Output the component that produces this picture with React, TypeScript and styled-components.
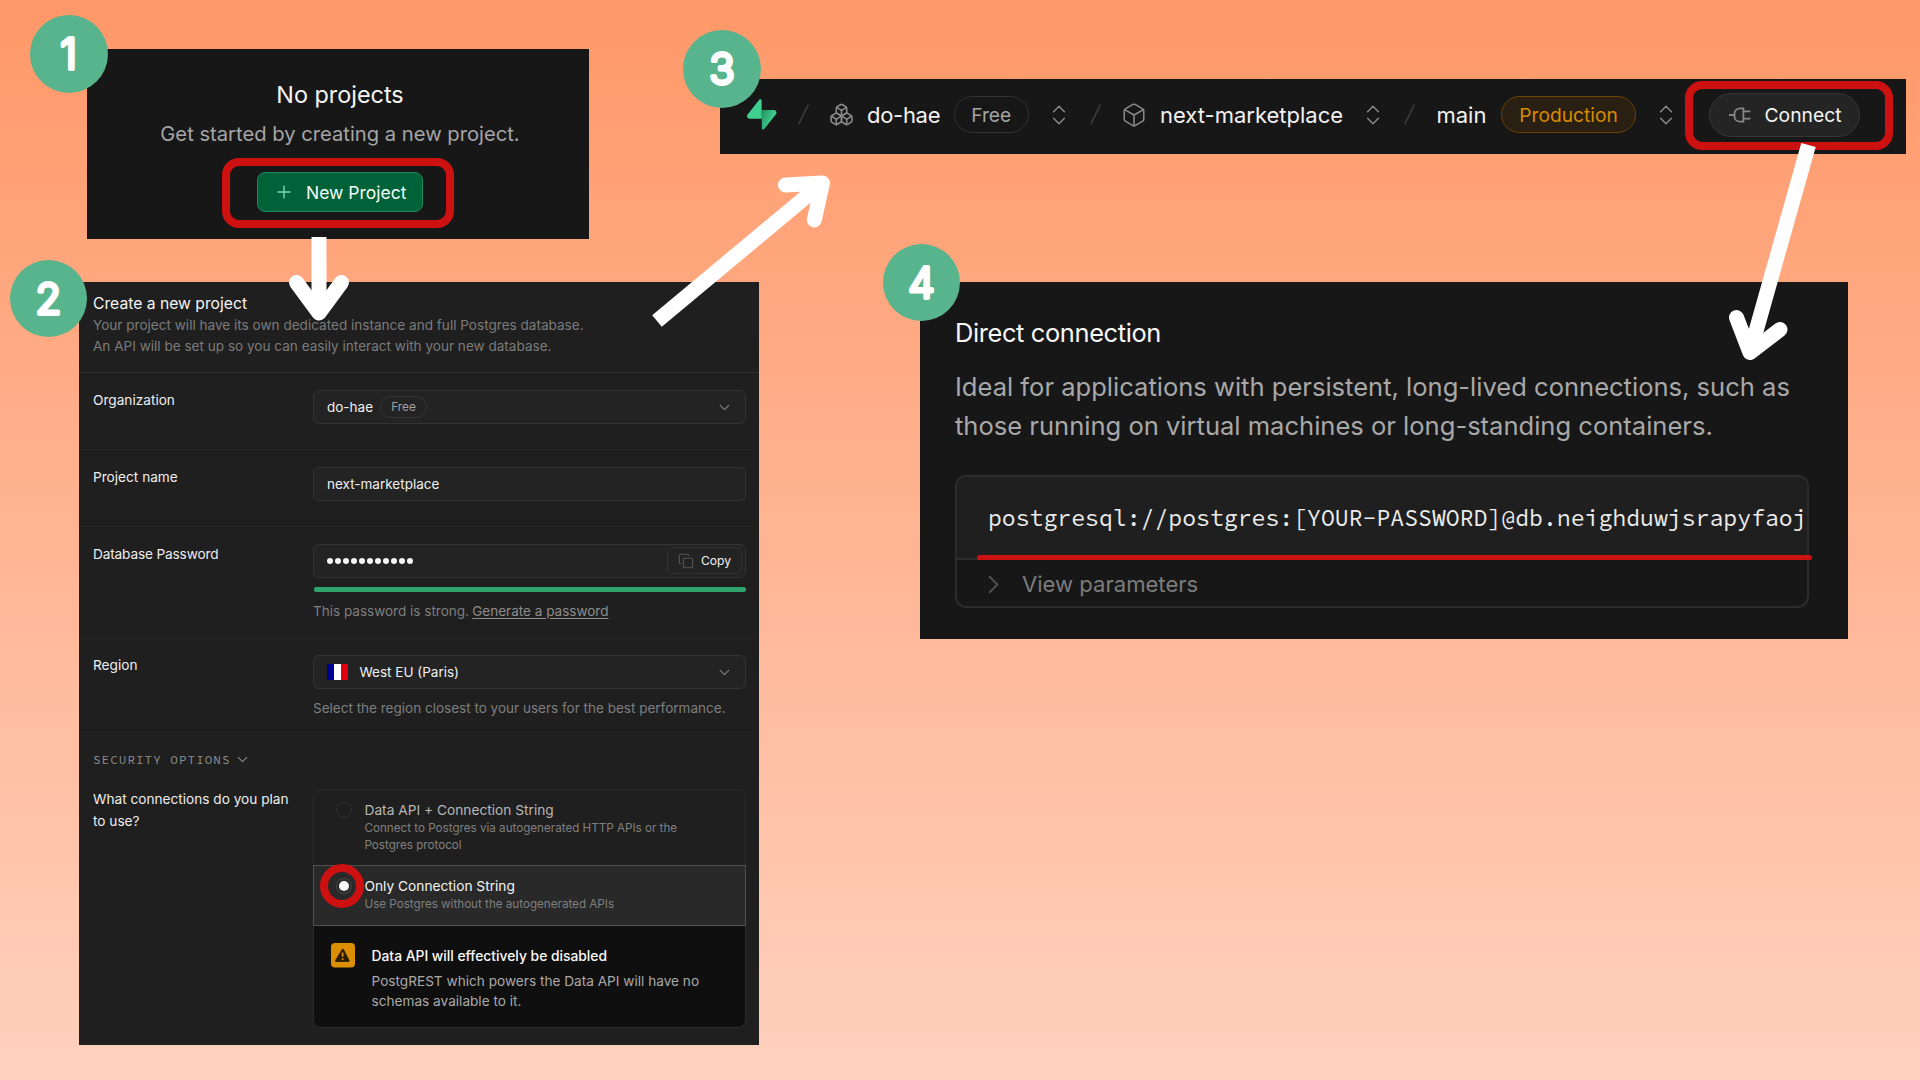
import React from "react";
import styled, { createGlobalStyle, css } from "styled-components";
import { Box, Boxes, ChevronDown, ChevronRight, ChevronsUpDown, Copy, Plus } from "lucide-react";

const sans = `Inter, "Liberation Sans", sans-serif`;
const mono = `"Source Code Pro", "Liberation Mono", monospace`;

const GlobalStyle = createGlobalStyle`
  *, *::before, *::after { box-sizing: border-box; }
  body { margin: 0; font-family: ${sans}; }
  p, h1, h2, h3 { margin: 0; font-weight: 400; }
`;

/* ---------- canvas ---------- */

const Canvas = styled.main`
  position: relative;
  width: 1920px;
  height: 1080px;
  overflow: hidden;
  background: linear-gradient(180deg, #ff9868 0%, #ffd1be 100%);
  white-space: nowrap;
`;

const Shot = styled.section<{ $x: number; $y: number; $w: number; $h: number; $bg?: string }>`
  position: absolute;
  left: ${(p) => p.$x}px;
  top: ${(p) => p.$y}px;
  width: ${(p) => p.$w}px;
  height: ${(p) => p.$h}px;
  background: ${(p) => p.$bg ?? "#171717"};
`;

const StepBadge = styled.div<{ $x: number; $y: number; $size: number }>`
  position: absolute;
  left: ${(p) => p.$x}px;
  top: ${(p) => p.$y}px;
  width: ${(p) => p.$size}px;
  height: ${(p) => p.$size}px;
  border-radius: 50%;
  background: #57b48d;

  svg {
    display: block;
    width: 100%;
    height: 100%;
  }

  text {
    font: 300 42px ${sans};
    fill: #fff;
    stroke: #fff;
    stroke-width: 3.8px;
    stroke-linejoin: round;
    text-anchor: middle;
  }
`;

const Highlight = styled.div<{ $x: number; $y: number; $w: number; $h: number; $r: number }>`
  position: absolute;
  left: ${(p) => p.$x}px;
  top: ${(p) => p.$y}px;
  width: ${(p) => p.$w}px;
  height: ${(p) => p.$h}px;
  border: 8.6px solid #cd1111;
  border-radius: ${(p) => p.$r}px;
`;

const Underline = styled.div`
  position: absolute;
  left: 977px;
  top: 555px;
  width: 835px;
  height: 5px;
  border-radius: 3px;
  background: #cd1111;
`;

const Arrows = styled.svg`
  position: absolute;
  inset: 0;
  width: 1920px;
  height: 1080px;
  fill: none;
  stroke: #fff;
  stroke-width: 15px;
  stroke-linejoin: round;

  .head {
    stroke-linecap: round;
  }
`;

/* ---------- step 1 ---------- */

const EmptyState = styled.div`
  display: flex;
  flex-direction: column;
  align-items: center;
  padding: 30px 0 0 4px;
`;

const EmptyTitle = styled.h2`
  font-size: 23.4px;
  line-height: 32px;
  color: #f5f5f5;
`;

const EmptyText = styled.p`
  margin-top: 9px;
  font-size: 20.2px;
  line-height: 28px;
  color: #a5a5a5;
`;

const PrimaryButton = styled.button`
  display: flex;
  align-items: center;
  gap: 12px;
  width: 166px;
  height: 40px;
  margin-top: 24px;
  padding: 0 0 0 16px;
  border: 1.5px solid #1b8a5a;
  border-radius: 8px;
  background: #006239;
  color: #f4fbf7;
  font: 400 17.5px ${sans};

  svg {
    color: #74dbae;
  }
`;

/* ---------- step 2 ---------- */

const FormHeader = styled.header`
  height: 91px;
  padding: 12px 0 0 14px;
  border-bottom: 1px solid #2e2e2e;
`;

const FormTitle = styled.h2`
  font-size: 15.7px;
  line-height: 20px;
  color: #f5f5f5;
`;

const FormLead = styled.p`
  margin-top: 1px;
  font-size: 13.57px;
  line-height: 20.5px;
  color: #7b7b7b;
`;

const FormRow = styled.div<{ $h?: number; $last?: boolean }>`
  display: grid;
  grid-template-columns: 220px 433px;
  align-items: start;
  height: ${(p) => (p.$h ? `${p.$h}px` : "auto")};
  padding: ${(p) => (p.$last ? "19px 0 0 14px" : "17px 0 0 14px")};
  border-bottom: ${(p) => (p.$last ? "0" : "1px solid #242424")};
`;

const Label = styled.label<{ $tight?: boolean; $drop?: boolean }>`
  padding-top: ${(p) => (p.$drop ? "0.5px" : "0")};
  font-size: 13.65px;
  line-height: 21.5px;
  letter-spacing: ${(p) => (p.$tight ? "-0.15px" : "normal")};
  color: #ededed;
`;

const Field = styled.div`
  display: flex;
  align-items: center;
  height: 34px;
  padding: 0 13px;
  border: 1px solid #333;
  border-radius: 6px;
  background: #232323;
  font-size: 13.5px;
  line-height: 20px;
  color: #efefef;

  > svg {
    margin-left: auto;
    margin-right: -1px;
    color: #848484;
  }
`;

const Pill = styled.span`
  display: flex;
  align-items: center;
  justify-content: center;
  width: 47px;
  height: 22px;
  margin-left: 7px;
  border: 1px solid #353535;
  border-radius: 11px;
  font-size: 11.8px;
  color: #a0a0a0;
`;

const Dots = styled.div`
  display: flex;
  gap: 2px;
  padding-top: 1px;

  i {
    width: 6px;
    height: 6px;
    border-radius: 50%;
    background: #f5f5f5;
  }
`;

const CopyButton = styled.button`
  display: flex;
  align-items: center;
  gap: 7px;
  width: 75px;
  height: 27px;
  margin: 0 -10px 0 auto;
  padding: 0 0 0 10px;
  border: 1px solid #313131;
  border-radius: 6px;
  background: #232323;
  color: #f0f0f0;
  font: 400 12.1px ${sans};

  svg {
    color: #565656;
  }
`;

const Strength = styled.div`
  height: 5px;
  margin: 9px 0 0 1px;
  border-radius: 2px;
  background: #2fa36b;
`;

const Hint = styled.p`
  margin-top: 9px;
  font-size: 13.52px;
  line-height: 20px;
  color: #7e7e7e;

  a {
    margin-left: -0.5px;
    color: #8c8c8c;
    text-decoration: underline;
    text-underline-offset: 2px;
  }
`;

const Flag = styled.span`
  width: 21px;
  height: 16px;
  margin-right: 11.5px;
  border-radius: 1px;
  background: linear-gradient(90deg, #000091 0 33.3%, #fff 33.3% 66.6%, #e1000f 66.6%);
`;

const SectionToggle = styled.div`
  display: flex;
  align-items: center;
  gap: 3.5px;
  padding: 13.5px 0 0 14px;
  font: 400 12.6px/20px ${mono};
  letter-spacing: 1.04px;
  color: #8c8c8c;
`;

const OptionCard = styled.div`
  height: 239px;
  border: 1px solid #2b2b2b;
  border-radius: 8px;
  overflow: visible;
`;

const Option = styled.div<{ $selected?: boolean }>`
  display: flex;
  align-items: flex-start;
  ${(p) =>
    p.$selected
      ? css`
          height: 61px;
          margin: 0 -1px;
          padding: 10.5px 0 0 23px;
          border: 1px solid #505050;
          background: #292929;
        `
      : css`
          height: 75px;
          padding: 10.5px 0 0 23px;
        `}
`;

const Radio = styled.span<{ $checked?: boolean }>`
  display: grid;
  place-items: center;
  width: 16px;
  height: 16px;
  margin: 2px 12.5px 0 -1px;
  border: 1px solid ${(p) => (p.$checked ? "#484848" : "#303030")};
  border-radius: 50%;

  &::after {
    content: "";
    width: 10px;
    height: 10px;
    border-radius: 50%;
    background: ${(p) => (p.$checked ? "#fafafa" : "transparent")};
  }
`;

const OptionTitle = styled.h3<{ $selected?: boolean }>`
  font-size: 13.72px;
  line-height: 20px;
  color: ${(p) => (p.$selected ? "#f2f2f2" : "#b6b6b6")};
`;

const OptionText = styled.p`
  font-size: 11.65px;
  line-height: 16.6px;
  color: #7f7f7f;
`;

const Alert = styled.div`
  display: flex;
  align-items: flex-start;
  height: 101px;
  padding: 17px 0 0 17px;
  border-radius: 0 0 7px 7px;
  background: #0f0f0f;
`;

const AlertBody = styled.div`
  margin: 3px 0 0 16.5px;
`;

const AlertTitle = styled.h3`
  font-size: 13.85px;
  font-weight: 500;
  line-height: 20px;
  color: #fafafa;
`;

const AlertText = styled.p`
  margin-top: 5px;
  font-size: 13.63px;
  line-height: 20.4px;
  color: #a9a9a9;
`;

/* ---------- step 3 ---------- */

const Breadcrumbs = styled.nav`
  display: grid;
  grid-template-columns:
    51px 31px 38px 86.7px 92.3px 44px 31px 39px 200px 44px
    32.5px 64.5px 152px 56.5px 151px;
  align-items: center;
  height: 100%;
  padding: 0 0 4px 27px;
  color: #8a8a8a;

  > svg {
    display: block;
  }
`;

const Crumb = styled.span`
  font-size: 22px;
  line-height: 30px;
  color: #f2f2f2;
`;

const ShortCrumb = styled(Crumb)`
  letter-spacing: -0.3px;
`;

const CrumbBadge = styled.span<{ $tone?: "amber" }>`
  display: flex;
  align-items: center;
  justify-content: center;
  height: 37px;
  border-radius: 19px;
  font-size: 19.2px;
  ${(p) =>
    p.$tone === "amber"
      ? css`
          width: 135px;
          border: 1.5px solid #6e4400;
          background: #291f13;
          color: #d98b00;
        `
      : css`
          width: 75px;
          border: 1.5px solid #333;
          color: #a5a5a5;
        `}
`;

const ConnectButton = styled.button`
  display: flex;
  align-items: center;
  gap: 13px;
  height: 44px;
  padding: 0 0 0 19px;
  border: 1.5px solid #363636;
  border-radius: 22px;
  background: #242424;
  color: #f5f5f5;
  font: 400 19.3px ${sans};
`;

/* ---------- step 4 ---------- */

const Connection = styled.div`
  padding: 35px 0 0 35px;
`;

const ConnectionTitle = styled.h2`
  font-size: 25.4px;
  line-height: 32px;
  letter-spacing: -0.36px;
  color: #f7f7f7;
`;

const ConnectionText = styled.p`
  margin-top: 18px;
  font-size: 25.55px;
  line-height: 39px;
  color: #a8a8a8;
`;

const CodeBox = styled.div`
  width: 854px;
  height: 133px;
  margin: 30px 0 0 0.4px;
  border: 2px solid #2c2c2c;
  border-radius: 11px;
  overflow: hidden;
`;

const CodeLine = styled.code`
  display: flex;
  align-items: center;
  height: 83px;
  padding: 0 0 0 30.5px;
  border-bottom: 2px solid #2c2c2c;
  background: #1f1f1f;
  font: 400 23.14px ${mono};
  color: #ebebeb;
`;

const Parameters = styled.div`
  display: flex;
  align-items: center;
  gap: 13px;
  height: 48px;
  padding-left: 20.5px;
  font-size: 22.1px;
  color: #7c7c7c;

  svg {
    color: #505050;
  }
`;

/* ---------- drawings ---------- */

const LogoMark = () => (
  <svg width="29.5" height="31" viewBox="0 0 109 113" fill="none">
    <defs>
      <linearGradient id="bolt" x1="54" y1="55" x2="94" y2="72" gradientUnits="userSpaceOnUse">
        <stop stopColor="#249361" />
        <stop offset="1" stopColor="#3ecf8e" />
      </linearGradient>
    </defs>
    <path
      d="M63.7 110.3C60.8 113.9 55 111.9 55 107.3L54 40H99.2C107.4 40 112 49.5 106.9 55.9L63.7 110.3Z"
      fill="url(#bolt)"
    />
    <path
      d="M45.3 2.1C48.2-1.5 54 .4 54 5L54.5 72.3H9.8C1.6 72.3-2.9 62.8 2.2 56.4L45.3 2.1Z"
      fill="#3ecf8e"
    />
  </svg>
);

const Slash = () => (
  <svg width="11" height="21" viewBox="0 0 11 21" fill="none" stroke="#3c3c3c" strokeWidth="1.5">
    <path d="M10.3.6.7 20.4" />
  </svg>
);

const PlugIcon = () => (
  <svg width="22" height="16" viewBox="0 0 22 16" fill="none" stroke="#868686" strokeWidth="1.8">
    <path d="M0 8h5.5M14.4 1.4h-3.2c-3.4 0-5.7 2.2-5.7 5.2v2.8c0 3 2.3 5.2 5.7 5.2h3.2V1.4ZM14.4 4.4h7M14.4 11.7h7" />
  </svg>
);

const WarningIcon = () => (
  <svg width="24" height="25" viewBox="0 0 24 25">
    <rect width="24" height="24.5" rx="4" fill="#db8e00" />
    <path
      d="M11.2 6.4 4.5 17.4c-.3.6 0 1.1.7 1.1h12.2c.7 0 1-.5.7-1.1L12.4 6.4c-.3-.6-.9-.6-1.2 0Z"
      fill="#2b1d02"
      stroke="#2b1d02"
      strokeWidth=".8"
      strokeLinejoin="round"
    />
    <path d="M11.6 9.6v4.2M11.6 15.2v1.7" stroke="#db8e00" strokeWidth="1.7" />
  </svg>
);

const Step = ({ n, x, y, size, dx = 0 }: { n: number; x: number; y: number; size: number; dx?: number }) => (
  <StepBadge $x={x} $y={y} $size={size}>
    <svg viewBox={`0 0 ${size} ${size}`}>
      <text x={size / 2 + dx} y={size / 2 + 15.4}>
        {n}
      </text>
    </svg>
  </StepBadge>
);

const Sorter = () => <ChevronsUpDown size={26} strokeWidth={1.3} />;

export default function App() {
  return (
    <>
      <GlobalStyle />
      <Canvas>
        <Shot $x={87} $y={49} $w={502} $h={190}>
          <EmptyState>
            <EmptyTitle>No projects</EmptyTitle>
            <EmptyText>Get started by creating a new project.</EmptyText>
            <PrimaryButton>
              <Plus size={20} strokeWidth={1.7} />
              New Project
            </PrimaryButton>
          </EmptyState>
        </Shot>

        <Shot $x={79} $y={282} $w={680} $h={763} $bg="#1f1f1f">
          <FormHeader>
            <FormTitle>Create a new project</FormTitle>
            <FormLead>
              Your project will have its own dedicated instance and full Postgres database.
              <br />
              An API will be set up so you can easily interact with your new database.
            </FormLead>
          </FormHeader>
          <FormRow $h={76.5}>
            <Label>Organization</Label>
            <Field>
              do-hae
              <Pill>Free</Pill>
              <ChevronDown size={17} strokeWidth={1.5} />
            </Field>
          </FormRow>
          <FormRow $h={77}>
            <Label>Project name</Label>
            <Field>next-marketplace</Field>
          </FormRow>
          <FormRow $h={111.5}>
            <Label $tight>Database Password</Label>
            <div>
              <Field>
                <Dots>
                  {Array.from({ length: 11 }, (_, i) => (
                    <i key={i} />
                  ))}
                </Dots>
                <CopyButton>
                  <Copy size={16} strokeWidth={1.6} />
                  Copy
                </CopyButton>
              </Field>
              <Strength />
              <Hint>
                This password is strong. <a>Generate a password</a>
              </Hint>
            </div>
          </FormRow>
          <FormRow $h={98}>
            <Label>Region</Label>
            <div>
              <Field>
                <Flag />
                West EU (Paris)
                <ChevronDown size={17} strokeWidth={1.5} />
              </Field>
              <Hint>Select the region closest to your users for the best performance.</Hint>
            </div>
          </FormRow>
          <SectionToggle>
            SECURITY OPTIONS
            <ChevronDown size={17} strokeWidth={1.5} />
          </SectionToggle>
          <FormRow $last>
            <Label $drop>
              What connections do you plan
              <br />
              to use?
            </Label>
            <OptionCard>
              <Option>
                <Radio />
                <div>
                  <OptionTitle>Data API + Connection String</OptionTitle>
                  <OptionText>
                    Connect to Postgres via autogenerated HTTP APIs or the
                    <br />
                    Postgres protocol
                  </OptionText>
                </div>
              </Option>
              <Option $selected>
                <Radio $checked />
                <div>
                  <OptionTitle $selected>Only Connection String</OptionTitle>
                  <OptionText>Use Postgres without the autogenerated APIs</OptionText>
                </div>
              </Option>
              <Alert>
                <WarningIcon />
                <AlertBody>
                  <AlertTitle>Data API will effectively be disabled</AlertTitle>
                  <AlertText>
                    PostgREST which powers the Data API will have no
                    <br />
                    schemas available to it.
                  </AlertText>
                </AlertBody>
              </Alert>
            </OptionCard>
          </FormRow>
        </Shot>

        <Shot $x={720} $y={79} $w={1186} $h={75}>
          <Breadcrumbs>
            <LogoMark />
            <Slash />
            <Boxes size={25} strokeWidth={1.5} />
            <ShortCrumb>do-hae</ShortCrumb>
            <CrumbBadge>Free</CrumbBadge>
            <Sorter />
            <Slash />
            <Box size={26} strokeWidth={1.4} />
            <Crumb>next-marketplace</Crumb>
            <Sorter />
            <Slash />
            <Crumb>main</Crumb>
            <CrumbBadge $tone="amber">Production</CrumbBadge>
            <Sorter />
            <ConnectButton>
              <PlugIcon />
              Connect
            </ConnectButton>
          </Breadcrumbs>
        </Shot>

        <Shot $x={920} $y={282} $w={928} $h={357}>
          <Connection>
            <ConnectionTitle>Direct connection</ConnectionTitle>
            <ConnectionText>
              Ideal for applications with persistent, long-lived connections, such as
              <br />
              those running on virtual machines or long-standing containers.
            </ConnectionText>
            <CodeBox>
              <CodeLine>postgresql://postgres:[YOUR-PASSWORD]@db.neighduwjsrapyfaoj</CodeLine>
              <Parameters>
                <ChevronRight size={31} strokeWidth={1.4} />
                View parameters
              </Parameters>
            </CodeBox>
          </Connection>
        </Shot>

        <Highlight $x={222} $y={158} $w={232} $h={70} $r={17} />
        <Highlight $x={1685} $y={81} $w={208} $h={69} $r={17} />
        <Highlight $x={320} $y={864} $w={44} $h={44} $r={22} />
        <Underline />

        <Arrows viewBox="0 0 1920 1080">
          <path d="M319 237V313" />
          <path className="head" d="M296.5 282.5 319 313l22.5-30.5" />
          <path d="M657 321 822.5 183" />
          <path className="head" d="m785.5 185 37-2-8.2 37" />
          <path d="M1808.5 145 1750 352.5" />
          <path className="head" d="m1736.5 317.5 13.5 35 30-23" />
        </Arrows>

        <Step n={1} x={30} y={15} size={78} dx={-0.5} />
        <Step n={2} x={10} y={260} size={77} />
        <Step n={3} x={683} y={30} size={78} />
        <Step n={4} x={883} y={244} size={77} />
      </Canvas>
    </>
  );
}
